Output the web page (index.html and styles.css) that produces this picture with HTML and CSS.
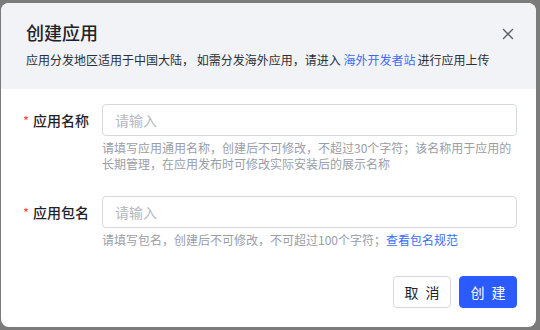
FILE: index.html
```html
<!DOCTYPE html>
<html lang="zh-CN">
<head>
<meta charset="utf-8">
<title>创建应用</title>
<link rel="stylesheet" href="styles.css">
</head>
<body>
<div class="dialog">
  <div class="header">
    <div class="title">创建应用</div>
    <div class="subtitle">应用分发地区适用于中国大陆， 如需分发海外应用，请进入 <a class="link">海外开发者站</a>进行应用上传</div>
    <button class="close" aria-label="关闭">
      <svg width="12" height="12" viewBox="0 0 12 12"><path d="M1.5 1.5L10.5 10.5M10.5 1.5L1.5 10.5" stroke="#5a5f66" stroke-width="1.4" stroke-linecap="round"/></svg>
    </button>
  </div>
  <div class="body">
    <div class="row">
      <label class="label"><span class="req">*</span>应用名称</label>
      <div class="field">
        <div class="input">请输入</div>
        <div class="help">请填写应用通用名称，创建后不可修改，不超过30个字符；该名称用于应用的长期管理，在应用发布时可修改实际安装后的展示名称</div>
      </div>
    </div>
    <div class="row row2">
      <label class="label"><span class="req">*</span>应用包名</label>
      <div class="field">
        <div class="input">请输入</div>
        <div class="help">请填写包名，创建后不可修改，不可超过100个字符；<a class="link strong">查看包名规范</a></div>
      </div>
    </div>
    <div class="footer">
      <button class="btn">取 消</button>
      <button class="btn primary">创 建</button>
    </div>
  </div>
</div>
</body>
</html>
```
FILE: styles.css
```css
* { box-sizing: border-box; }
html, body { margin: 0; padding: 0; }
body {
  background: #7b7b7b;
  width: 540px;
  height: 330px;
  overflow: hidden;
  font-family: "Noto Sans CJK SC", "Noto Sans", sans-serif;
}
.dialog {
  margin: 3px 0 0 1px;
  width: 535px;
  height: 324px;
  background: #fff;
  border-radius: 8px;
  overflow: hidden;
}
.header {
  position: relative;
  background: #f2f3f7;
  height: 86px;
  padding: 17px 25px 0 25px;
}
.title {
  font-size: 18px;
  line-height: 24px;
  font-weight: 500;
  color: #1f2329;
}
.subtitle {
  margin-top: 7px;
  font-size: 12px;
  line-height: 18px;
  color: #2b2f36;
}
.link { color: #3c6cf6; text-decoration: none; cursor: pointer; margin-right: 2px; }
.close {
  position: absolute;
  right: 21px;
  top: 24px;
  width: 14px;
  height: 14px;
  padding: 0;
  border: 0;
  background: none;
  display: flex;
  align-items: center;
  justify-content: center;
}
.body {
  padding: 15px 19px 0 21px;
}
.row {
  display: flex;
}
.row2 { margin-top: 24px; }
.label {
  width: 80px;
  flex: none;
  height: 32px;
  display: flex;
  align-items: center;
  font-size: 14px;
  font-weight: 500;
  color: #1f2329;
  padding-left: 1px;
}
.req {
  color: #f54a45;
  margin-right: 4px;
  font-weight: 400;
  font-size: 13px;
}
.field { flex: 1; }
.input {
  height: 32px;
  border: 1px solid #d5d8de;
  border-radius: 4px;
  padding: 0 12px;
  display: flex;
  align-items: center;
  font-size: 14px;
  color: #b4b8bf;
}
.help {
  margin-top: 4px;
  font-size: 12px;
  line-height: 16px;
  color: #9a9ea6;
}
.help .strong { color: #3c6cf6; }
.footer {
  margin-top: 28px;
  display: flex;
  justify-content: flex-end;
  gap: 8px;
}
.btn {
  width: 58px;
  height: 32px;
  border: 1px solid #d5d8de;
  border-radius: 4px;
  background: #fff;
  font-family: inherit;
  font-size: 14px;
  color: #1f2329;
  padding: 0;
  letter-spacing: 2px;
  text-indent: 2px;
}
.btn.primary {
  background: #2b5bff;
  border-color: #2b5bff;
  color: #fff;
}
```
